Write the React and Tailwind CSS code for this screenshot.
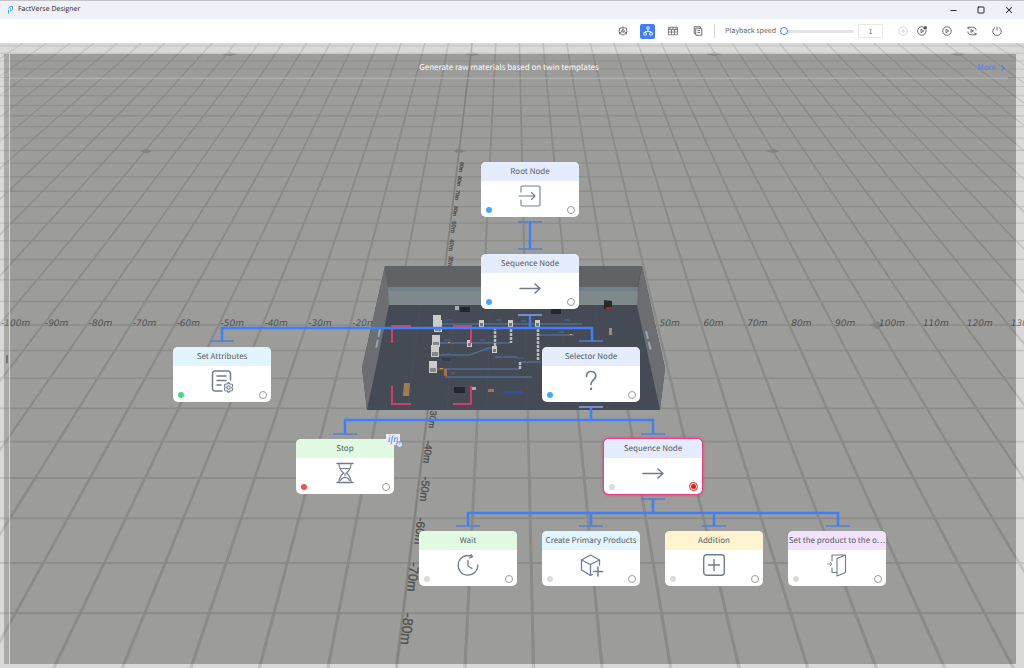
import React from 'react'
import { Minus, Square, X, ChevronRight } from 'lucide-react'

const HORIZON = -286
const CENTER = 512

// floor is a perspective grid, one cell is 10 metres
const rowY = (n) => HORIZON + 15258 / (24.97 - n)
const colX = (k, y) => CENTER + (438 + 43.9 * k - CENTER) * (y - HORIZON) / 611

const rows = Array.from({ length: 32 }, (_, i) => i - 22)
const cols = Array.from({ length: 48 }, (_, i) => i - 22)

const depthLabels = [
  { text: '-30m', x: 432, y: 418, size: 9 },
  { text: '-40m', x: 427, y: 452, size: 10 },
  { text: '-50m', x: 424, y: 489, size: 11 },
  { text: '-60m', x: 419, y: 531, size: 12 },
  { text: '-70m', x: 412, y: 577, size: 13 },
  { text: '-80m', x: 406, y: 629, size: 14 },
  { text: '30m', x: 450, y: 262, size: 6 },
  { text: '40m', x: 451, y: 245, size: 6 },
  { text: '50m', x: 453, y: 227, size: 6 },
  { text: '60m', x: 455, y: 211, size: 5 },
  { text: '70m', x: 457, y: 195, size: 5 },
  { text: '80m', x: 459, y: 181, size: 5 },
  { text: '90m', x: 461, y: 167, size: 5 },
]

const heads = {
  blue: 'bg-[#e4ecfe]',
  cyan: 'bg-[#e1f5fe]',
  green: 'bg-[#e1fbe2]',
  yellow: 'bg-[#fef4cf]',
  purple: 'bg-[#f2e2fd]',
}

const dots = {
  blue: 'bg-[#4ba6fb]',
  green: 'bg-[#3fdd78]',
  red: 'bg-[#fb4b4b]',
  idle: 'bg-[#dcdcdc]',
}

const nodes = [
  { id: 'root', title: 'Root Node', icon: 'enter', head: 'blue', dot: 'blue', x: 308, y: 83 },
  { id: 'seq1', title: 'Sequence Node', icon: 'arrow', head: 'blue', dot: 'blue', x: 308, y: 175 },
  { id: 'attrs', title: 'Set Attributes', icon: 'attributes', head: 'cyan', dot: 'green', x: 0, y: 268 },
  { id: 'selector', title: 'Selector Node', icon: 'question', head: 'blue', dot: 'blue', x: 369, y: 268 },
  { id: 'stop', title: 'Stop', icon: 'hourglass', head: 'green', dot: 'red', x: 123, y: 360, condition: 'ifn' },
  { id: 'seq2', title: 'Sequence Node', icon: 'arrow', head: 'blue', dot: 'idle', x: 431, y: 360, selected: true },
  { id: 'wait', title: 'Wait', icon: 'clock', head: 'green', dot: 'idle', x: 246, y: 452 },
  { id: 'create', title: 'Create Primary Products', icon: 'cube', head: 'cyan', dot: 'idle', x: 369, y: 452 },
  { id: 'add', title: 'Addition', icon: 'plus', head: 'yellow', dot: 'idle', x: 492, y: 452 },
  { id: 'set', title: 'Set the product to the o…', icon: 'door', head: 'purple', dot: 'idle', x: 615, y: 452 },
]

const icons = {
  enter: (
    <>
      <path d="M2 7V2.500a1.500 1.500 0 0 1 1.500-1.500h16a1.500 1.500 0 0 1 1.500 1.500v17a1.500 1.500 0 0 1-1.500 1.500h-16a1.500 1.500 0 0 1-1.500-1.500V15" />
      <path d="M0 11h16M12.500 7.500 16 11l-3.500 3.500" />
    </>
  ),
  arrow: <path d="M1 11.500h20M16 7l5 4.500-5 4.500" strokeWidth="1.500" />,
  attributes: (
    <>
      <path d="M11 21H4a2.500 2.500 0 0 1-2.500-2.500v-15A2.500 2.500 0 0 1 4 1h13a2.500 2.500 0 0 1 2.500 2.500V10" strokeWidth="1.500" />
      <path d="M6 6h9M6 10.500h9M6 15h4" strokeWidth="1.500" />
      <path d="m17.500 12.500 1.500 1.500 2.300.2.300 2-.9 1.300.9 1.500-.5 1.700-2.100.3-1.500 1.500-1.500-1.500-2.100-.3-.5-1.700.9-1.500-.9-1.500.5-1.800 2.100-.2z" />
      <circle cx="17.500" cy="17.500" r="1.700" />
    </>
  ),
  question: (
    <>
      <path d="M6.500 6.500C6.500 3 8.500 1.500 11 1.500s4.800 1.700 4.800 4.500c0 3.800-4.800 4.200-4.800 8.500" strokeWidth="1.700" />
      <circle cx="11" cy="18.700" r="1.200" fill="#717b90" stroke="none" />
    </>
  ),
  hourglass: (
    <>
      <path d="M3 1.500h16M3 20.500h16" strokeWidth="1.500" />
      <path d="M5 2c0 5 2.500 7 4.500 9-2 2-4.500 4-4.500 9M17 2c0 5-2.500 7-4.500 9 2 2 4.500 4 4.500 9" />
      <path d="M7 6.500h8M6.500 18.500c1.500-4 7.500-4 9 0M11 11v3" />
    </>
  ),
  clock: (
    <>
      <path d="M14.500 2.200A9.800 9.800 0 1 0 20.800 11" strokeWidth="1.300" />
      <path d="m14 .500 1.500 2.200-3 1.300M11 6.500V12l4 2.500" strokeWidth="1.300" />
    </>
  ),
  cube: (
    <>
      <path d="M19.500 11V6L10.500 1 1.500 6v10l9 5.500 2-1M1.500 6l9 4.500 9-4.500M10.500 10.500v11" strokeWidth="1.300" />
      <path d="M18 13v9M13.500 17.500h9" strokeWidth="1.500" />
    </>
  ),
  plus: (
    <>
      <rect x="0.700" y="0.700" width="20.600" height="20.600" rx="3" strokeWidth="1.400" />
      <path d="M11 5.500v11M5.500 11h11" strokeWidth="1.400" />
    </>
  ),
  door: (
    <>
      <path d="M6 7V1h13.500v17.500l-8.500 3.500V4.500L19.500 1M6 14v4.500h5" />
      <path d="M1.500 10h4M4 8l2 2-2 2" strokeWidth="0.800" />
    </>
  ),
}

function NodeIcon({ name }) {
  return (
    <svg viewBox="0 0 22 22" className="h-[22px] w-[22px] overflow-visible" fill="none" stroke="#717b90" strokeWidth="1.1" strokeLinecap="round" strokeLinejoin="round">
      {icons[name]}
    </svg>
  )
}

function TreeNode({ node }) {
  return (
    <div
      className={`absolute h-[55px] w-[98px] rounded-[5px] bg-white ${node.selected ? 'shadow-[0_0_0_1px_#e63e80,0_0_3px_1px_#e63e80]' : ''}`}
      style={{ left: node.x, top: node.y }}
    >
      <h3 className={`flex h-[19px] items-center justify-center rounded-t-[5px] text-[8px] leading-[14px] whitespace-nowrap text-[#565c66] ${heads[node.head]}`}>
        {node.title}
      </h3>
      <div className="flex justify-center pt-1">
        <NodeIcon name={node.icon} />
      </div>
      <span className={`absolute bottom-1 left-[5px] h-[6px] w-[6px] rounded-full ${dots[node.dot]}`} />
      {node.selected ? (
        <button aria-label="Breakpoint" className="absolute right-1 bottom-[3px] flex h-[9px] w-[9px] items-center justify-center rounded-full border border-[#f01818]">
          <span className="h-[5px] w-[5px] rounded-full bg-[#f01818]" />
        </button>
      ) : (
        <button aria-label="Breakpoint" className="absolute right-1 bottom-[3px] h-2 w-2 rounded-full border border-[#9a9a9a]" />
      )}
      {node.condition && (
        <span className="absolute -top-[5px] left-[90px] h-[11px] w-[14px] bg-[#eceef4] text-center font-['Liberation_Serif',serif] text-[10px] leading-[11px] text-[#4a7bec] italic">
          {node.condition}
          <span className="absolute top-[7px] left-[10px] h-[7px] w-[7px] rounded-full border border-[#7d8fc8] bg-[#e4e8f4] text-center text-[5px] leading-[5px] not-italic">1</span>
        </span>
      )}
    </div>
  )
}

function Floor() {
  return (
    <svg viewBox="0 43 1024 625" preserveAspectRatio="xMidYMid slice" className="absolute inset-0 h-full w-full">
      <rect x="0" y="43" width="1024" height="625" fill="#d9d9d7" />
      <g stroke="#c2c2c1">
        {rows.map((n) => {
          const y = rowY(n)
          return <line key={n} x1="0" x2="1024" y1={y} y2={y} strokeWidth={0.9 + (y / 668) * 1.4} />
        })}
        {cols.map((k) => (
          <polygon
            key={k}
            fill="#bfbfbe"
            stroke="none"
            points={`${colX(k, 43) - 0.8},43 ${colX(k, 43) + 0.8},43 ${colX(k, 668) + 1.7},668 ${colX(k, 668) - 1.7},668`}
          />
        ))}
        <line x1={colX(0, 43)} y1="43" x2={colX(0, 668)} y2="668" stroke="#b0b0af" />
      </g>
      <g fill="#b6b6b5">
        <path d="M140 151l6-2.500 7 2.500-7 2.500zM453 151l6-2.500 7 2.500-7 2.500zM766 151l7-2.500 7 2.500-7 2.500zM870 325l7-4 7 4-7 4z" />
        <path d="M222 54l8-2 8 2-8 2zM465 54l7-2 8 2-8 2zM706 54l8-2 8 2-8 2zM950 54l8-2 8 2-8 2z" />
      </g>
      <g fill="#6f6f6e" fontFamily="DejaVu Sans, sans-serif" fontSize="9" fontStyle="italic">
        {[-10, -9, -8, -7, -6, -5, -4, -3, -2, 5, 6, 7, 8, 9, 10, 11, 12, 13].map((k) => (
          <text key={k} x={colX(k, 325) + 2} y="326">{k * 10}m</text>
        ))}
      </g>
      <g fill="#6f6f6e" stroke="#6f6f6e" strokeWidth="0.3" fontFamily="Liberation Sans, sans-serif" textAnchor="middle">
        {depthLabels.map((l) => (
          <text key={l.text} fontSize={l.size} transform={`translate(${l.x} ${l.y}) rotate(96)`} dominantBaseline="middle">{l.text}</text>
        ))}
      </g>
    </svg>
  )
}

function Room() {
  return (
    <g>
      <path d="M385 266H642L665 368 660 410H367L362 368z" fill="#444b55" />
      <path d="M385 266H642L637 288H388z" fill="#5f6364" />
      <path d="M388 287H638V305H388z" fill="#7e898b" />
      <path d="M388 287H638V291H388z" fill="#6d8389" />
      <path d="M385 266 362 368 367 410 389 305 388 287z" fill="#6d6e71" />
      <path d="M642 266 665 368 660 410 637 305 638 287z" fill="#6d6e71" />
      <path d="M380 329l-4 20M646 331l5 20" stroke="#91a7bb" strokeWidth="2" strokeDasharray="8 3" />
      <g stroke="#4d535c" strokeWidth="0.6">
        <path d="M386 318H640M383 333H643M380 348H646M377 363H649M374 378H652M370 394H656" />
        <path d="M420 305l-12 104M455 305l-8 104M490 305l-3 104M525 305l2 104M560 305l8 104M595 305l14 104" />
      </g>
      {/* conveyor lines */}
      <g stroke="#5f7ba8" fill="none">
        <path d="M438 324H582M438 343H510M432 355H470L488 348H495M435 369H520V362H541M445 377H532M537 335H574M495 357H517" />
        <path d="M446 320h6M496 320h5M521 321h5M564 320h6M444 340h7M480 340h5M446 354h4M451 373h4M484 350h5M558 332h6M516 358h8" stroke="#4467b2" />
      </g>
      <g stroke="#b9bcbe" strokeWidth="2.500" strokeDasharray="3 1">
        <path d="M511 325V343M495 327V346M538 325V361M520 362V370" />
      </g>
      {[[433, 315], [434, 320], [432, 335], [431, 345], [429, 361]].map(([x, y]) => (
        <g key={y}>
          <rect x={x} y={y} width="8" height="12" fill="#cbcbc8" />
          <rect x={x + 1} y={y + 7} width="6" height="4" fill="#858786" />
        </g>
      ))}
      {[[479, 320], [508, 320], [535, 320], [467, 340], [492, 346]].map(([x, y]) => (
        <g key={x}>
          <rect x={x} y={y} width="5" height="7" fill="#cccdca" />
          <rect x={x + 1} y={y + 3} width="3" height="3" fill="#747777" />
        </g>
      ))}
      <path d="M460 307h10v5h-10zM551 309h10v5h-10zM454 387h11v6h-11z" fill="#23272d" />
      <path d="M455 306h4v4h-4zM471 387h5v3h-5z" fill="#a8acae" />
      <path d="M404 383h6l-1 13h-6z" fill="#9d7c57" />
      <path d="M444 369h3v7h-3zM488 389h6v3h-6z" fill="#b36a3c" />
      <path d="M503 391h20v3h-20z" fill="#304daa" />
      <path d="M442 358h10l-2 3h-7z" fill="#303e50" />
      <path d="M609 328h3v7h-3z" fill="#9c8c83" />
      <path d="M604 300l8 1v8h-8z" fill="#292929" />
      <path d="M606 307h8v3h-8z" fill="#912f30" />
      <path d="M448 342h2v1h-2zM440 368h3v1h-3zM570 334h2v1h-2z" fill="#c9a32d" />
      <path d="M392 343V326H411M453 326H471V343M392 386V404H411M453 404H471V386" fill="none" stroke="#d63c6b" strokeWidth="2" />
    </g>
  )
}

function Links() {
  return (
    <g fill="none">
      <path d="M530 222V249M530 315V328M222 341V328H592V341M591 406V420M345 434V420H653V434M653 499V513M468 526V513H838V526M591 513V526M714 513V526" stroke="#3f80f7" strokeWidth="2.500" />
      <path d="M518 222h24M518 249h24M210 341h24M579 341h24M333 434h24M641 434h24M641 499h24M456 526h24M579 526h24M702 526h24M826 526h24" stroke="#5280d2" strokeWidth="1.500" />
      <path d="M518 315h24M579 407h24" stroke="#738fc6" strokeWidth="2" />
    </g>
  )
}

function ToolButton({ label, active, faded, children }) {
  return (
    <button
      aria-label={label}
      className={`flex h-[15px] w-[15px] shrink-0 items-center justify-center rounded-[2px] ${active ? 'bg-[#3f7ffb] text-white' : faded ? 'text-[#cfcfcf]' : 'text-[#555]'}`}
    >
      <svg viewBox="0 0 20 20" className="h-[10px] w-[10px]" fill="none" stroke="currentColor" strokeWidth="1.7" strokeLinejoin="round">
        {children}
      </svg>
    </button>
  )
}

function TitleBar() {
  return (
    <header className="flex h-[19px] items-center justify-between border-t border-[#c2c4c8] bg-[#eef2f8] pr-[10px] pl-[7px]">
      <div className="flex items-center gap-1">
        <svg viewBox="0 0 14 16" className="h-2 w-[7px]" fill="none" stroke="#38a8e0" strokeWidth="2">
          <path d="M3 15V8M3 5c1-3 4-4 8-4v5c0 2-1 3-4 3" />
          <path d="M7 4v8" stroke="#75cbed" />
        </svg>
        <h1 className="font-['Open_Sans',sans-serif] text-[7px] leading-[18px] text-[#222]">FactVerse Designer</h1>
      </div>
      <div className="flex items-center gap-[19px] text-[#222]">
        <button aria-label="Minimize"><Minus size={9} strokeWidth={2.5} /></button>
        <button aria-label="Maximize"><Square size={8} strokeWidth={3} /></button>
        <button aria-label="Close"><X size={10} strokeWidth={2.5} /></button>
      </div>
    </header>
  )
}

function Toolbar() {
  return (
    <div className="flex h-6 items-center justify-end bg-white pr-5">
      <div className="flex items-center gap-[10px]">
        <ToolButton label="Settings">
          <path d="M10 1.500 12.500 3.500 17 4.500V8.500L18.500 10 17 12v3.500l-4.500 1L10 18.500l-2.500-2-4.500-1V12L1.500 10 3 8.500v-4l4.500-1z" />
          <circle cx="10" cy="10" r="2.500" />
          <path d="M10 3v4M4 14l4-3M16 14l-4-3" />
        </ToolButton>
        <ToolButton label="Behavior tree" active>
          <circle cx="10" cy="4" r="2.600" />
          <path d="M10 7v4M4 13v-2h12v2M1.500 13h5v5h-5zM13.500 13h5v5h-5z" />
        </ToolButton>
        <ToolButton label="Table">
          <path d="M1 2.500h18v15H1zM1 7h18M1 12h18M7 7v10M13 7v10M4 2v5M10 2v5M16 2v5" strokeWidth="1.4" />
        </ToolButton>
        <ToolButton label="Log">
          <path d="M5.500 4.500h12v14h-12zM5 15H2.500V1.500H15V4M9 9h5M9 13h5" />
        </ToolButton>
      </div>
      <div className="mr-[10px] ml-[9px] h-[14px] w-px bg-[#d6d6d6]" />
      <label htmlFor="speed" className="mr-1 text-[7px] leading-[14px] text-[#666]">Playback speed</label>
      <input
        id="speed"
        type="range"
        min="1"
        max="10"
        defaultValue="1"
        className="h-2 w-[74px] appearance-none bg-transparent [&::-webkit-slider-runnable-track]:h-[3px] [&::-webkit-slider-runnable-track]:rounded-full [&::-webkit-slider-runnable-track]:bg-[#e3e3e3] [&::-webkit-slider-thumb]:-mt-[3px] [&::-webkit-slider-thumb]:h-2 [&::-webkit-slider-thumb]:w-2 [&::-webkit-slider-thumb]:appearance-none [&::-webkit-slider-thumb]:rounded-full [&::-webkit-slider-thumb]:border [&::-webkit-slider-thumb]:border-solid [&::-webkit-slider-thumb]:border-[#3f7ffb] [&::-webkit-slider-thumb]:bg-white"
      />
      <input
        aria-label="Speed value"
        defaultValue="1"
        className="ml-1 h-[14px] w-[25px] border border-[#e8e8e8] text-center text-[7px] leading-3 text-[#666]"
      />
      <div className="ml-3 flex items-center">
        <ToolButton label="Step back" faded>
          <circle cx="10" cy="10" r="8.500" />
          <path d="M12 7v6l-4-3z" />
        </ToolButton>
        <div className="ml-1 flex items-center gap-[10px]">
          <ToolButton label="Step forward">
            <path d="M18 8a8.500 8.500 0 1 1-5-6M8 6.500v7l5.500-3.500z" />
            <path d="M14 1.500h4.500V6H14z" fill="currentColor" />
          </ToolButton>
          <ToolButton label="Play">
            <circle cx="10" cy="10" r="8.500" />
            <path d="M8 6.500v7l5.500-3.500z" />
          </ToolButton>
          <ToolButton label="Replay">
            <path d="M2 6V2.500h12L18 6v3M18 14v3.500H6L2 14v-3M2 3l4 4M18 17l-4-4M8 7v6l5-3z" />
          </ToolButton>
          <ToolButton label="Power">
            <path d="M6 3a8.500 8.500 0 1 0 8 0M10 1v8" />
          </ToolButton>
        </div>
      </div>
    </div>
  )
}

export default function App() {
  return (
    <div className="flex min-h-screen flex-col overflow-hidden bg-[#d9d9d7] [font-family:'Noto_Sans_CJK_SC',sans-serif] [text-rendering:geometricPrecision]">
      <TitleBar />
      <Toolbar />
      <main className="relative flex grow flex-col">
        <Floor />
        <section className="relative mt-[11px] mr-2 mb-1 ml-1 flex grow bg-black/28">
          <div className="flex w-[6px] items-center justify-center border-r border-white/50 bg-white/15">
            <span className="h-2 w-[2px] border-x border-[#777]" />
          </div>
          <div className="flex min-w-0 grow flex-col">
            <div className="mr-2 grid h-[25px] grid-cols-[1fr_auto_1fr] items-center border-b-2 border-white/20 pt-1 text-[8px] leading-[14px]">
              <h2 className="col-start-2 text-white">Generate raw materials based on twin templates</h2>
              <a href="#more" className="flex items-center gap-[2px] justify-self-end text-[#5583f5]">
                More <ChevronRight size={10} strokeWidth={3} className="shrink-0" />
              </a>
            </div>
            <div className="flex grow justify-center pl-[34px]">
              <div className="relative h-[585px] w-[714px] shrink-0">
                <svg viewBox="173 79 714 585" className="h-full w-full">
                  <Room />
                  <Links />
                </svg>
                {nodes.map((node) => (
                  <TreeNode key={node.id} node={node} />
                ))}
              </div>
            </div>
          </div>
        </section>
      </main>
    </div>
  )
}
